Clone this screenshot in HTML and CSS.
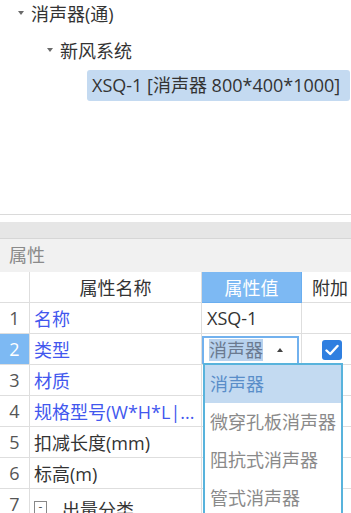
FILE: index.html
```html
<!DOCTYPE html>
<html>
<head>
<meta charset="utf-8">
<link rel="stylesheet" href="styles.css">
</head>
<body>
<div class="app">
  <div class="tree">
    <div class="node n1"><span class="tri"></span><span>消声器(通)</span></div>
    <div class="node n2"><span class="tri"></span><span>新风系统</span></div>
    <div class="node n3"><span class="sel">XSQ-1 [消声器 800*400*1000]</span></div>
  </div>
  <div class="sep"></div>
  <div class="splitter"></div>
  <div class="panel-title">属性</div>
  <div class="grid">
    <div class="row head">
      <div class="c idx"></div>
      <div class="c name center">属性名称</div>
      <div class="c val hval">属性值</div>
      <div class="c ext">附加</div>
    </div>
    <div class="row">
      <div class="c idx">1</div>
      <div class="c name blue">名称</div>
      <div class="c val">XSQ-1</div>
      <div class="c ext"></div>
    </div>
    <div class="row">
      <div class="c idx active">2</div>
      <div class="c name blue">类型</div>
      <div class="c val"><div class="editor"><span class="hl">消声器</span><span class="up"></span></div></div>
      <div class="c ext"><span class="check"><svg width="14" height="12" viewBox="0 0 14 12"><path d="M1.5 6.5 L5.2 10 L12.5 2" fill="none" stroke="#fff" stroke-width="2.4" stroke-linecap="round" stroke-linejoin="round"/></svg></span></div>
    </div>
    <div class="row">
      <div class="c idx">3</div>
      <div class="c name blue">材质</div>
      <div class="c val"></div>
      <div class="c ext"></div>
    </div>
    <div class="row">
      <div class="c idx">4</div>
      <div class="c name blue">规格型号(W*H*L|...</div>
      <div class="c val"></div>
      <div class="c ext"></div>
    </div>
    <div class="row">
      <div class="c idx">5</div>
      <div class="c name">扣减长度(mm)</div>
      <div class="c val"></div>
      <div class="c ext"></div>
    </div>
    <div class="row">
      <div class="c idx">6</div>
      <div class="c name">标高(m)</div>
      <div class="c val"></div>
      <div class="c ext"></div>
    </div>
    <div class="row">
      <div class="c idx">7</div>
      <div class="c name"><span class="minus">-</span><span class="grp">出量分类</span></div>
      <div class="c val"></div>
      <div class="c ext"></div>
    </div>
    <div class="dropdown">
      <div class="item on">消声器</div>
      <div class="item">微穿孔板消声器</div>
      <div class="item">阻抗式消声器</div>
      <div class="item">管式消声器</div>
    </div>
  </div>
</div>
</body>
</html>
```
FILE: styles.css
```css
html, body {
  margin: 0;
  padding: 0;
  background: #fff;
  overflow: hidden;
}
body {
  width: 351px;
  height: 513px;
  font-family: "Open Sans", "Noto Sans CJK SC", sans-serif;
  font-size: 18px;
  color: #333;
}
.app {
  display: flex;
  flex-direction: column;
}
.tree {
  height: 214px;
  display: flex;
  flex-direction: column;
}
.node {
  display: flex;
  align-items: center;
}
.n1 { height: 26px; padding-left: 18px; }
.n2 { height: 26px; margin-top: 11px; padding-left: 47px; }
.n3 { height: 31px; margin-top: 7px; padding-left: 87px; }
.tri {
  width: 0;
  height: 0;
  border-left: 3.5px solid transparent;
  border-right: 3.5px solid transparent;
  border-top: 4px solid #6a6a6a;
  margin-right: 7px;
}
.sel {
  background: #c4daf1;
  border-radius: 3px;
  height: 31px;
  line-height: 31px;
  padding: 0 4px 0 5px;
  width: 254px;
  white-space: nowrap;
}
.sep {
  height: 1px;
  background: #dadada;
}
.splitter {
  margin-top: 7px;
  height: 16px;
  background: #e6e6e6;
  border-bottom: 1px solid #d6d6d6;
}
.panel-title {
  height: 33px;
  line-height: 33px;
  background: #f1f1f1;
  color: #8a8a8a;
  padding-left: 9px;
}
.grid {
  position: relative;
  display: flex;
  flex-direction: column;
}
.row {
  display: grid;
  grid-template-columns: 30px 172px 100px 1fr;
  height: 31px;
}
.c {
  border-right: 1px solid #dedede;
  border-bottom: 1px solid #dedede;
  display: flex;
  align-items: center;
  white-space: nowrap;
  overflow: hidden;
}
.c.ext { border-right: none; }
.idx {
  justify-content: center;
  color: #555;
}
.idx.active {
  background: #7db9f3;
  color: #fff;
}
.name { padding-left: 4px; }
.center { justify-content: center; padding-left: 0; }
.blue { color: #4257ee; }
.val { padding-left: 5px; }
.hval {
  background: #7db9f3;
  color: #fff;
  justify-content: center;
  padding-left: 0;
  border-color: #6aaef0;
}
.ext { padding-left: 10px; }
.editor {
  box-sizing: border-box;
  margin-left: -5px;
  width: 97px;
  height: 29px;
  margin-top: 2px;
  border: 2px solid #72b1ee;
  display: flex;
  align-items: center;
  padding-left: 5px;
}
.hl {
  background: #b8d2ee;
  color: #6b7a90;
  line-height: 22px;
}
.up {
  width: 0;
  height: 0;
  border-left: 3.5px solid transparent;
  border-right: 3.5px solid transparent;
  border-bottom: 4px solid #444;
  margin-left: 14px;
}
.check {
  width: 20px;
  height: 20px;
  border-radius: 3px;
  background: #2f7fe0;
  display: flex;
  align-items: center;
  justify-content: center;
  margin-left: 10px;
  margin-top: 2px;
}
.minus {
  box-sizing: border-box;
  width: 13px;
  height: 13px;
  border: 1px solid #888;
  font-size: 12px;
  line-height: 10px;
  display: flex;
  justify-content: center;
  color: #555;
  margin-top: 6px;
}
.grp { margin-left: 15px; margin-top: 10px; }
.dropdown {
  position: absolute;
  left: 203px;
  top: 91px;
  width: 140px;
  height: 170px;
  box-sizing: border-box;
  border: 2px solid #58b3dc;
  background: #fff;
}
.item {
  height: 38px;
  line-height: 38px;
  padding-left: 5px;
  color: #8a8a8a;
  white-space: nowrap;
}
.item.on {
  background: #c3daf1;
  color: #5a8ec9;
}
```
